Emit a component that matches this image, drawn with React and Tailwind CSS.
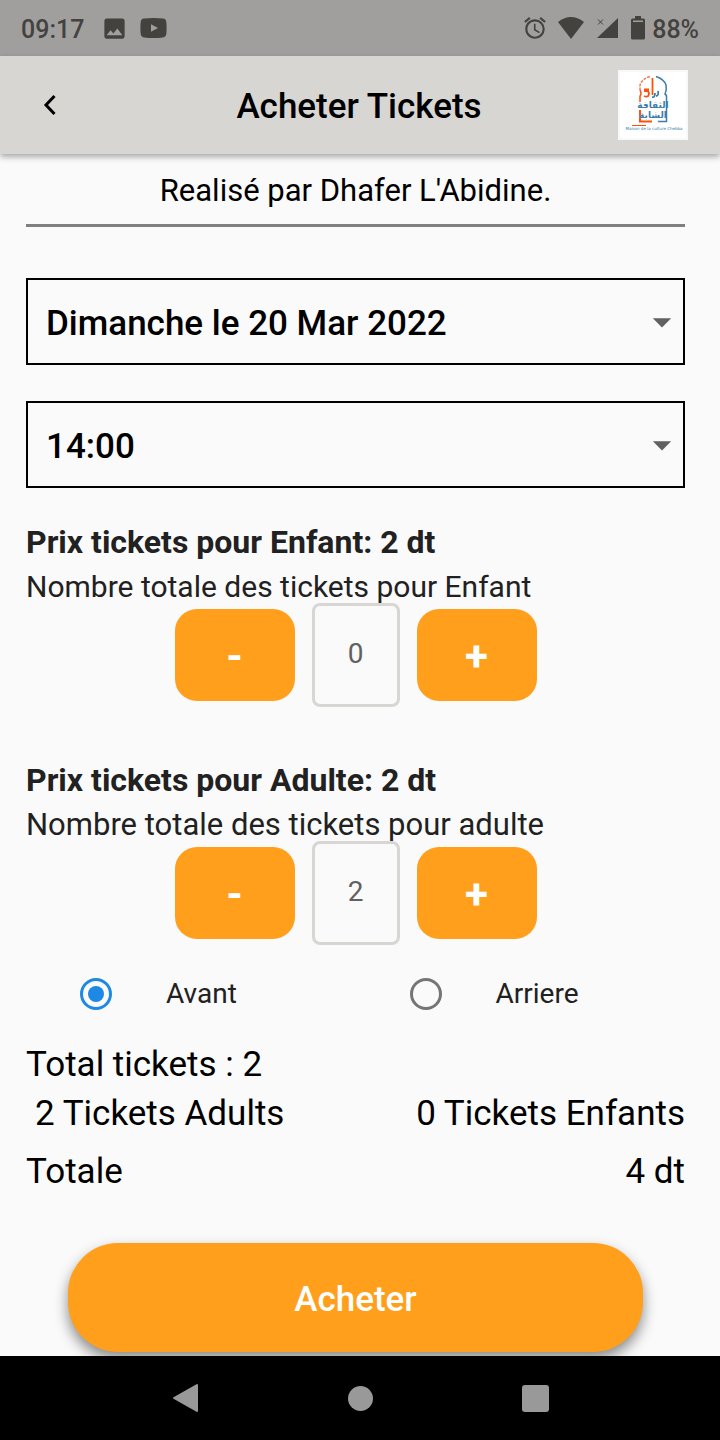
import { useState } from "react";
import { MdAlarm, MdImage, MdArrowDropDown } from "react-icons/md";

function StatusBar() {
  return (
    <div className="flex h-14 items-center justify-between bg-[#a09f9d] px-[21px] text-[25px] leading-8 text-[#43423f]">
      <div className="flex items-center">
        <span className="pt-1 font-medium">09:17</span>
        <MdImage className="ml-[17px] size-[27px]" aria-hidden="true" />
        <svg className="ml-3 h-5 w-[27px]" viewBox="0 0 27 20" aria-hidden="true">
          <path
            fill="currentColor"
            fillRule="evenodd"
            d="M4 .6Q13.500-.4 23 .6Q26 1 26.300 4Q26.900 10 26.300 16Q26 19 23 19.400Q13.500 20.400 4 19.400Q1 19 .7 16Q.1 10 .7 4Q1 1 4 .6ZM11 6.200V13.800L18 10Z"
          />
        </svg>
      </div>
      <div className="flex items-center">
        <MdAlarm className="size-[26px]" aria-hidden="true" />
        <svg className="ml-[10px] h-[22px] w-[26px]" viewBox="0 0 26 22" aria-hidden="true">
          <path fill="currentColor" d="M0 5Q13-5 26 5L13 22Z" />
        </svg>
        <svg className="ml-3 h-[22px] w-[23px]" viewBox="0 0 23 22" aria-hidden="true">
          <path fill="currentColor" d="M22 1V21H1Z" />
          <path stroke="currentColor" strokeWidth="1" d="M2 2.500L7 7.500M7 2.500L2 7.500" />
        </svg>
        <svg className="ml-3 h-6 w-[14px]" viewBox="0 0 14 24" aria-hidden="true">
          <path
            fill="currentColor"
            fillRule="evenodd"
            d="M4 0H10V2.500H12.500Q14 2.500 14 4V22Q14 23.500 12.500 23.500H1.500Q0 23.500 0 22V4Q0 2.500 1.500 2.500H4ZM2 4.500V6H12V4.500Z"
          />
        </svg>
        <span className="ml-[7px] pt-1 font-medium">88%</span>
      </div>
    </div>
  );
}

function Logo() {
  return (
    <svg className="size-[70px]" viewBox="0 0 70 70" role="img" aria-label="Maison de la culture">
      <rect width="70" height="70" fill="#fff" />
      <rect x="1" y="1" width="68" height="68" fill="none" stroke="#f2f2f2" />
      <g fill="none" strokeWidth="1.500">
        <path stroke="#e9835c" d="M32 6.500Q24 9 22 15V20" strokeDasharray="3 1" />
        <path stroke="#ff4f0a" d="M22 20Q24 24 22 26V32" />
        <path stroke="#ff4f0a" strokeWidth="2" d="M22 40V51.500H34" />
        <path stroke="#3d7cae" d="M38 6.500Q46 9 48 15Q49 20 47 24Q49 25 48.500 28V51.500H40" />
        <path stroke="#ff4f0a" d="M34.500 8V25" strokeWidth="1.800" />
        <path stroke="#ff4f0a" d="M26 26Q31 28 31 23L29 20" strokeWidth="1.800" />
        <path stroke="#3d7cae" d="M34 27Q37 28 37 23M38 26Q41 26 40 21" strokeWidth="1.800" />
        <path stroke="#ff4f0a" d="M14 55.500H28" strokeWidth="1" />
      </g>
      <rect x="26" y="18.500" width="5" height="3.500" fill="#ff4f0a" />
      <g fill="#3d7cae" fontFamily="DejaVu Sans, sans-serif" textAnchor="middle">
        <text x="35" y="38" fontSize="9" fontWeight="bold">الثقافة</text>
        <text x="35" y="48" fontSize="9" fontWeight="bold">الشابة</text>
        <text x="36" y="60" fontSize="4">Maison de la culture Chebba</text>
      </g>
    </svg>
  );
}

function Header() {
  return (
    <header className="relative grid grid-cols-[1fr_auto_1fr] items-center bg-[#d7d6d2] py-[14px] pr-8 pl-[30px] shadow-[0_3px_6px_rgba(0,0,0,0.32)]">
      <button type="button" aria-label="Retour" className="flex size-10 items-center justify-center">
        <svg className="h-[22px] w-4" viewBox="0 0 16 22" fill="none" aria-hidden="true">
          <path stroke="#000" strokeWidth="3" d="M12.500 2L4 11L12.500 20" />
        </svg>
      </button>
      <h1 className="pt-1 text-[35px] leading-10 font-medium">Acheter Tickets</h1>
      <div className="justify-self-end">
        <Logo />
      </div>
    </header>
  );
}

function SelectBox({ label, options }) {
  return (
    <div className="relative">
      <select
        aria-label={label}
        className="block h-[87px] w-full appearance-none border-2 border-black bg-transparent pt-[5px] pr-14 pl-[18px] text-[35px] font-medium text-black"
      >
        {options.map((option) => (
          <option key={option}>{option}</option>
        ))}
      </select>
      <MdArrowDropDown
        className="pointer-events-none absolute inset-y-0 right-px my-auto size-[44px] text-[#616161]"
        aria-hidden="true"
      />
    </div>
  );
}

const stepButton =
  "h-[92px] w-[120px] rounded-[22px] bg-[#ff9f1c] pt-1 text-[42px] leading-none font-bold text-white";

function TicketCounter({ id, title, label, large, value, onChange }) {
  return (
    <section>
      <h2 className="text-[32px] leading-[44px] font-bold text-[#212121]">{title}</h2>
      <label
        htmlFor={id}
        className={`mt-[5px] block leading-9 text-[#212121] ${large ? "text-[31px]" : "text-[30px]"}`}
      >
        {label}
      </label>
      <div className="mt-1 flex h-[92px] items-center justify-center gap-[17px]">
        <button
          type="button"
          aria-label="Moins"
          className={stepButton}
          onClick={() => onChange(Math.max(0, value - 1))}
        >
          -
        </button>
        <input
          id={id}
          type="text"
          inputMode="numeric"
          readOnly
          value={value}
          className="h-[104px] w-[88px] shrink-0 rounded-lg border-[3px] border-[#d7d6d2] bg-transparent pb-1 text-center text-[28px] text-[#616161]"
        />
        <button
          type="button"
          aria-label="Plus"
          className={stepButton}
          onClick={() => onChange(value + 1)}
        >
          +
        </button>
      </div>
    </section>
  );
}

function Seat({ label, checked, onSelect }) {
  return (
    <label className="flex h-14 items-center gap-[54px] pl-[54px] text-[28px] text-[#212121]">
      <input
        type="radio"
        name="place"
        checked={checked}
        onChange={onSelect}
        className="size-8 appearance-none rounded-full border-[3px] border-[#757575] bg-clip-content p-[5px] checked:border-[#1e88e5] checked:bg-[#1e88e5]"
      />
      {label}
    </label>
  );
}

function NavBar() {
  return (
    <nav className="flex h-[84px] items-center justify-center gap-[149px] bg-black text-[#999]">
      <button type="button" aria-label="Précédent">
        <svg className="h-[30px] w-[27px]" viewBox="0 0 27 30" aria-hidden="true">
          <path
            fill="currentColor"
            stroke="currentColor"
            strokeWidth="2"
            strokeLinejoin="round"
            d="M2 15L25 2V28Z"
          />
        </svg>
      </button>
      <button type="button" aria-label="Accueil" className="size-[25px] rounded-full bg-[#999]" />
      <button type="button" aria-label="Applications récentes" className="size-[27px] rounded-[3px] bg-[#999]" />
    </nav>
  );
}

export default function App() {
  const [children, setChildren] = useState(0);
  const [adults, setAdults] = useState(2);
  const [place, setPlace] = useState("Avant");

  return (
    <div className="flex min-h-screen flex-col bg-[#fafafa] font-[Roboto,sans-serif] text-black">
      <StatusBar />
      <Header />
      <main className="flex-1 pt-[19px] pr-[35px] pb-1 pl-[26px]">
        <p className="border-b-[3px] border-[#808080] pb-[15px] text-center text-[31px] leading-9">
          Realisé par Dhafer L'Abidine.
        </p>
        <div className="mt-[51px] flex flex-col gap-9">
          <SelectBox label="Date" options={["Dimanche le 20 Mar 2022"]} />
          <SelectBox label="Heure" options={["14:00"]} />
        </div>
        <div className="mt-8 flex flex-col gap-[57px]">
          <TicketCounter
            id="enfant"
            title="Prix tickets pour Enfant: 2 dt"
            label="Nombre totale des tickets pour Enfant"
            value={children}
            onChange={setChildren}
          />
          <TicketCounter
            id="adulte"
            title="Prix tickets pour Adulte: 2 dt"
            label="Nombre totale des tickets pour adulte"
            large
            value={adults}
            onChange={setAdults}
          />
        </div>
        <div className="mt-[27px] grid grid-cols-2">
          <Seat label="Avant" checked={place === "Avant"} onSelect={() => setPlace("Avant")} />
          <Seat label="Arriere" checked={place === "Arriere"} onSelect={() => setPlace("Arriere")} />
        </div>
        <div className="mt-[22px] text-[35px] leading-[42px]">
          <p>Total tickets : {children + adults}</p>
          <div className="mt-[7px] flex justify-between pl-[9px]">
            <span>{adults} Tickets Adults</span>
            <span>{children} Tickets Enfants</span>
          </div>
          <div className="mt-4 flex justify-between">
            <span>Totale</span>
            <span>{(children + adults) * 2} dt</span>
          </div>
        </div>
        <div className="mt-[50px] px-[42px]">
          <button
            type="button"
            className="block h-[109px] w-full rounded-[50px] bg-[#ff9f1c] pt-[5px] text-[35px] font-medium text-white shadow-[0_7px_14px_rgba(0,0,0,0.45)]"
          >
            Acheter
          </button>
        </div>
      </main>
      <NavBar />
    </div>
  );
}
